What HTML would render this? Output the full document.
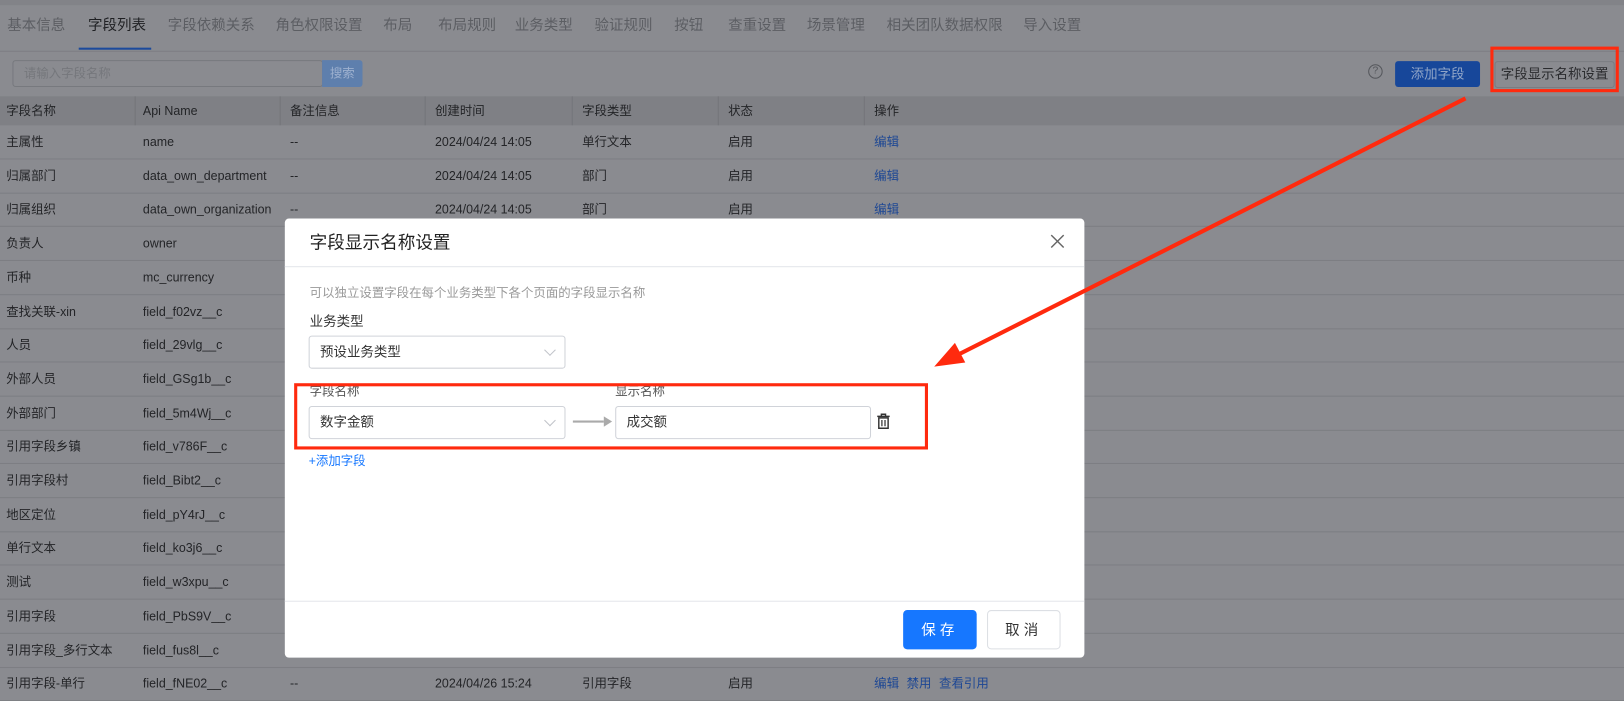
<!DOCTYPE html>
<html><head><meta charset="utf-8"><style>
*{margin:0;padding:0;box-sizing:border-box}
body{width:1624px;height:693px;overflow:hidden;background:#8a8b90;font-family:"Liberation Sans","Noto Sans CJK SC",sans-serif;font-size:12px;color:#232427;position:relative}
#w{position:absolute;left:0;top:0;width:1568px;height:670px;transform:scale(1.03571);transform-origin:0 0}
.a{position:absolute;white-space:nowrap;line-height:16px}
.tab{position:absolute;top:15px;font-size:14px;color:#5c5e63;line-height:18px}
.hl{position:absolute;left:0;width:1568px;height:1px;background:#7d7e83}
.row div{position:absolute;white-space:nowrap;line-height:16px}
.lnk{color:#1d4794}
.modal{position:absolute;left:275px;top:211px;width:772px;height:424px;background:#fff;border-radius:4px}
.sel{position:absolute;border:1px solid #d0d3d9;border-radius:3px;background:#fff;font-size:13px;color:#333;padding-left:10px;line-height:30px;height:32px}
.chev{position:absolute;right:10px;top:9px;width:8px;height:8px;border-right:1px solid #c0c3c9;border-bottom:1px solid #c0c3c9;transform:rotate(45deg)}
</style></head><body><div id="w">
<div class="hl" style="top:0;height:5px;background:#828388"></div>
<div class="tab" style="left:7px">基本信息</div>
<div class="tab" style="left:85px;color:#1f2023">字段列表</div>
<div class="a" style="left:76px;top:46px;width:70px;height:2px;background:#1c4a9c"></div>
<div class="tab" style="left:162px">字段依赖关系</div>
<div class="tab" style="left:266px">角色权限设置</div>
<div class="tab" style="left:370px">布局</div>
<div class="tab" style="left:423px">布局规则</div>
<div class="tab" style="left:497px">业务类型</div>
<div class="tab" style="left:574px">验证规则</div>
<div class="tab" style="left:651px">按钮</div>
<div class="tab" style="left:703px">查重设置</div>
<div class="tab" style="left:779px">场景管理</div>
<div class="tab" style="left:856px">相关团队数据权限</div>
<div class="tab" style="left:988px">导入设置</div>
<div class="hl" style="top:49px"></div>
<div class="a" style="left:12px;top:58px;width:300px;height:26px;border:1px solid #77797e;border-radius:3px;color:#75777c;padding:4px 10px;font-size:12px">请输入字段名称</div>
<div class="a" style="left:311px;top:58px;width:39px;height:26px;background:#5e7fad;color:#9eb1cf;text-align:center;line-height:26px;border-radius:0 3px 3px 0">搜索</div>
<div class="a" style="left:1321px;top:62px;width:14px;height:14px;border:1px solid #55575c;border-radius:50%;font-size:10px;line-height:12px;text-align:center;color:#55575c">?</div>
<div class="a" style="left:1347px;top:59px;width:82px;height:25px;background:#17479a;border-radius:3px;color:#8fa4c7;text-align:center;line-height:25px;font-size:13px">添加字段</div>
<div class="a" style="left:1443px;top:59px;width:116px;height:26px;border:1px solid #7a7c81;border-radius:3px;color:#2a2b2e;text-align:center;line-height:24px;font-size:13px">字段显示名称设置</div>
<div class="a" style="left:0;top:93px;width:1568px;height:28px;background:#7f8085"></div>
<div class="row" style="position:absolute;top:99px;left:0">
<div style="left:6px">字段名称</div><div style="left:138px">Api Name</div><div style="left:280px">备注信息</div><div style="left:420px">创建时间</div><div style="left:562px">字段类型</div><div style="left:703px">状态</div><div style="left:844px">操作</div></div>
<div class="a" style="left:130px;top:93px;width:1px;height:28px;background:#74757a"></div>
<div class="a" style="left:270px;top:93px;width:1px;height:28px;background:#74757a"></div>
<div class="a" style="left:410px;top:93px;width:1px;height:28px;background:#74757a"></div>
<div class="a" style="left:552px;top:93px;width:1px;height:28px;background:#74757a"></div>
<div class="a" style="left:693px;top:93px;width:1px;height:28px;background:#74757a"></div>
<div class="a" style="left:834px;top:93px;width:1px;height:28px;background:#74757a"></div>
<div id="rows"></div>
<script>
var d=[["主属性","name","--","2024/04/24 14:05","单行文本","启用","编辑"],["归属部门","data_own_department","--","2024/04/24 14:05","部门","启用","编辑"],["归属组织","data_own_organization","--","2024/04/24 14:05","部门","启用","编辑"],["负责人","owner"],["币种","mc_currency"],["查找关联-xin","field_f02vz__c"],["人员","field_29vlg__c"],["外部人员","field_GSg1b__c"],["外部部门","field_5m4Wj__c"],["引用字段乡镇","field_v786F__c"],["引用字段村","field_Bibt2__c"],["地区定位","field_pY4rJ__c"],["单行文本","field_ko3j6__c"],["测试","field_w3xpu__c"],["引用字段","field_PbS9V__c"],["引用字段_多行文本","field_fus8l__c"],["引用字段-单行","field_fNE02__c","--","2024/04/26 15:24","引用字段","启用","编辑 禁用 查看引用"]];
var xs=[6,138,280,420,562,703,844],h="";
d.forEach(function(r,i){var y=121+i*32.7;h+='<div class="hl" style="top:'+Math.round(y+32)+'px"></div>';r.forEach(function(t,j){h+='<div class="a'+(j==6?' lnk':'')+'" style="left:'+xs[j]+'px;top:'+Math.round(y+8)+'px;word-spacing:'+(j==6?'4px':'0')+'">'+t+'</div>'})});
document.getElementById("rows").innerHTML=h;
</script>
<div class="modal">
<div class="a" style="left:24px;top:14px;font-size:17px;color:#222;line-height:20px">字段显示名称设置</div>
<div class="a" style="left:737px;top:13px;width:18px;height:18px">
<svg width="18" height="18"><path d="M3 3L15 15M15 3L3 15" stroke="#666" stroke-width="1.4"/></svg></div>
<div class="a" style="left:0;top:46px;width:772px;height:1px;background:#e4e6ea"></div>
<div class="a" style="left:24px;top:64px;color:#999;font-size:12px">可以独立设置字段在每个业务类型下各个页面的字段显示名称</div>
<div class="a" style="left:24px;top:92px;color:#333;font-size:13px">业务类型</div>
<div class="sel" style="left:23px;top:113px;width:248px">预设业务类型<span class="chev"></span></div>
<div class="a" style="left:24px;top:159px;color:#555;font-size:12px">字段名称</div>
<div class="a" style="left:319px;top:159px;color:#555;font-size:12px">显示名称</div>
<div class="sel" style="left:23px;top:181px;width:248px">数字金额<span class="chev"></span></div>
<svg class="a" style="left:278px;top:188px" width="40" height="16"><path d="M0 8H30" stroke="#aaa" stroke-width="2"/><path d="M30 3L38 8L30 13Z" fill="#aaa"/></svg>
<div class="sel" style="left:319px;top:181px;width:247px">成交额</div>
<svg class="a" style="left:571px;top:188px" width="14" height="16"><path d="M1 3H13M5 3V1H9V3" stroke="#333" stroke-width="1.4" fill="none"/><path d="M2.5 4.5H11.5V14.5H2.5Z" stroke="#333" stroke-width="1.4" fill="none"/><path d="M5.5 6.5V12.5M8.5 6.5V12.5" stroke="#333" stroke-width="1.2"/></svg>
<div class="a" style="left:23px;top:226px;color:#1677ff;font-size:12px">+添加字段</div>
<div class="a" style="left:0;top:369px;width:772px;height:1px;background:#e4e6ea"></div>
<div class="a" style="left:597px;top:378px;width:71px;height:38px;background:#1677ff;border-radius:4px;color:#fff;text-align:center;line-height:38px;font-size:14px;letter-spacing:4px">保存</div>
<div class="a" style="left:678px;top:378px;width:71px;height:38px;border:1px solid #dcdfe4;border-radius:4px;color:#333;text-align:center;line-height:36px;font-size:14px;letter-spacing:4px">取消</div>
</div>
<div class="a" style="left:1439px;top:45px;width:124px;height:44px;border:3px solid #ff2a0e"></div>
<div class="a" style="left:284px;top:370px;width:612px;height:64px;border:3px solid #ff2a0e"></div>
<svg class="a" style="left:0;top:0" width="1568" height="670"><path d="M1415 95L920 345" stroke="#ff2a0e" stroke-width="4"/><path d="M902 354L922 331L932 350Z" fill="#ff2a0e"/></svg>
</div></body></html>
